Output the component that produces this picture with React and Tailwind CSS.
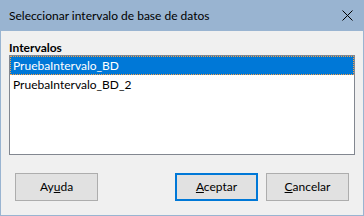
export default function App() {
  const font = { fontFamily: 'Lato, "Noto Sans", sans-serif' };
  return (
    <div className="w-[364px] h-[216px] flex flex-col bg-[#f0f0f0] border border-t-0 border-[#99b4d1] text-[12px] text-black" style={font}>
      <div className="h-[31px] bg-[#99b4d1] flex items-center pl-[8px] pr-[10px] shrink-0">
        <span className="flex-1 leading-none">Seleccionar intervalo de base de datos</span>
        <svg width="11" height="11" viewBox="0 0 11 11" className="mt-[-1px]">
          <path d="M0.5 0.5 L10.5 10.5 M10.5 0.5 L0.5 10.5" stroke="#000" strokeWidth="1" />
        </svg>
      </div>
      <div className="flex flex-col px-[8px] pt-[9px]">
        <div className="font-bold leading-[15px] h-[15px]">Intervalos</div>
        <div className="h-[100px] bg-white border border-[#828790] flex flex-col">
          <div className="h-[19px] bg-[#0078d7] text-white border border-dotted border-[#f7a046] flex items-center pl-[2px] leading-none">
            PruebaIntervalo_BD
          </div>
          <div className="h-[19px] flex items-center pl-[3px] leading-none">PruebaIntervalo_BD_2</div>
        </div>
      </div>
      <div className="flex items-center px-[14px] mt-[18px]">
        <button className="w-[83px] h-[28px] bg-[#e1e1e1] border border-[#adadad] leading-none">
          Ay<span className="underline">u</span>da
        </button>
        <div className="flex-1" />
        <button className="w-[83px] h-[28px] bg-[#e1e1e1] border-2 border-[#0078d7] leading-none">
          <span className="underline">A</span>ceptar
        </button>
        <button className="w-[83px] h-[28px] ml-[8px] bg-[#e1e1e1] border border-[#adadad] leading-none">
          <span className="underline">C</span>ancelar
        </button>
      </div>
    </div>
  );
}
